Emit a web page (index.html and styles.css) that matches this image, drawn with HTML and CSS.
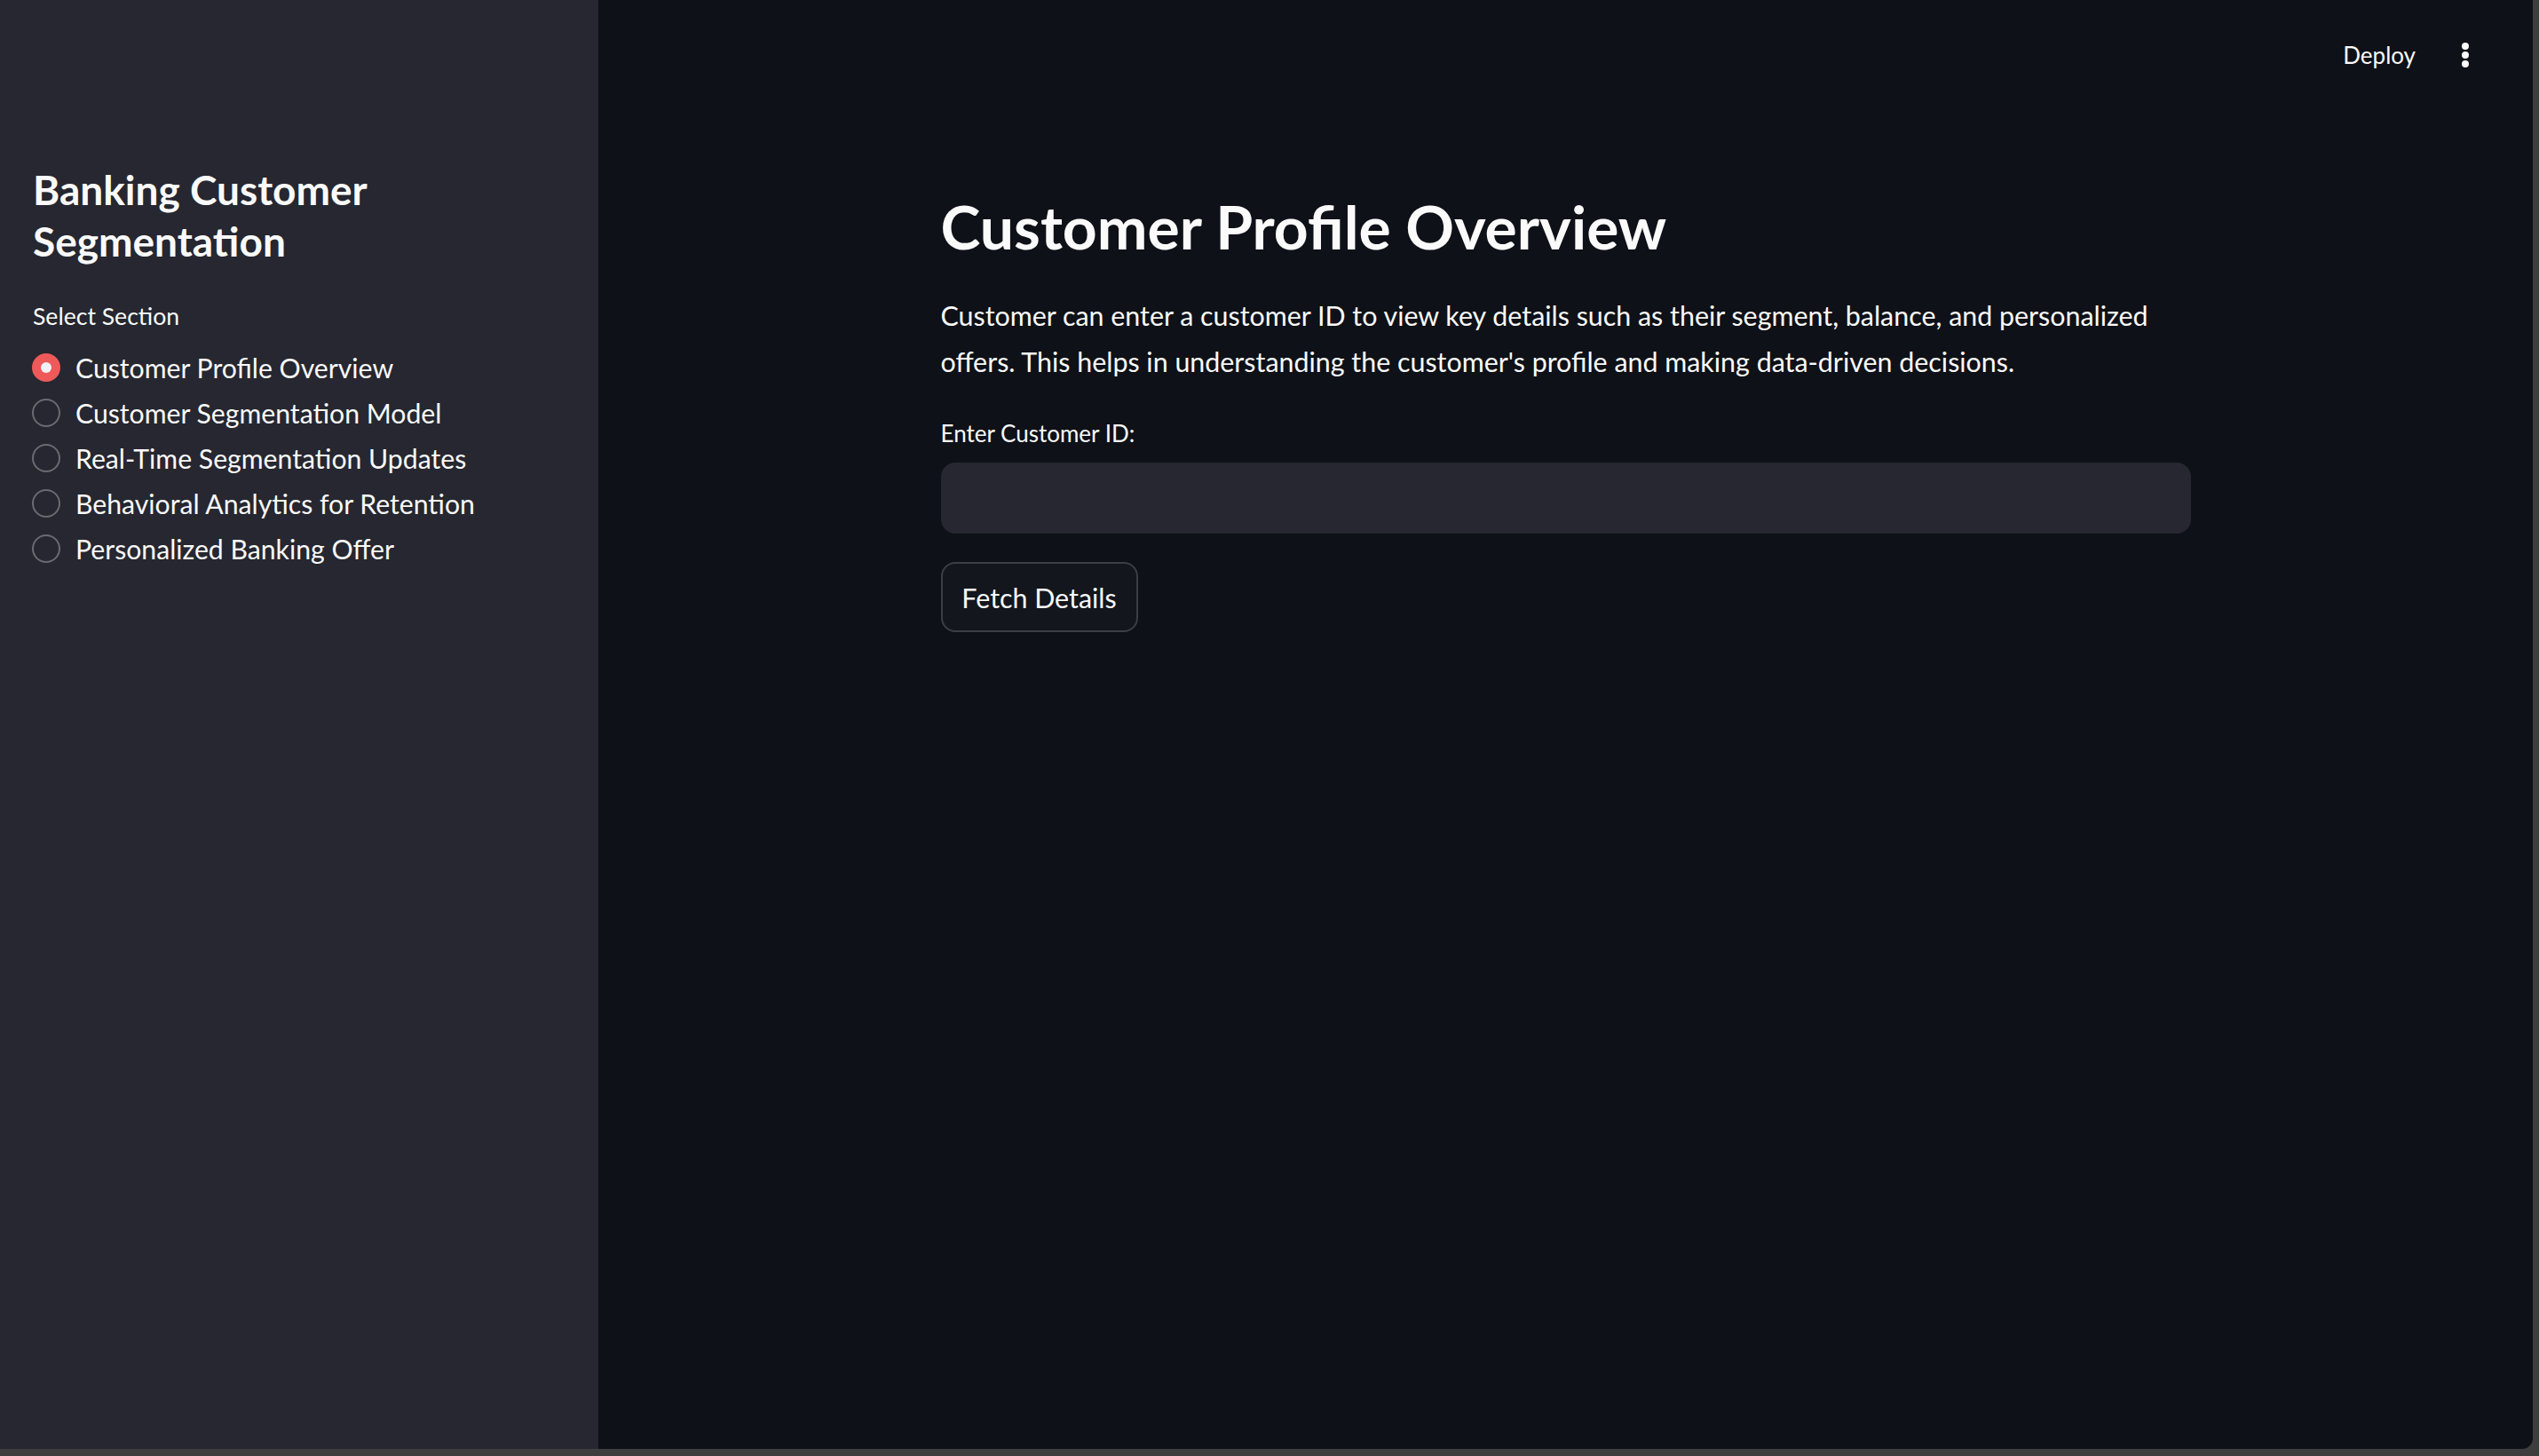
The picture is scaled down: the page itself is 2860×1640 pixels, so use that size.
FILE: index.html
```html
<!DOCTYPE html>
<html lang="en">
<head>
<meta charset="utf-8">
<title>Customer Profile Overview</title>
<link rel="stylesheet" href="styles.css">
</head>
<body>
<div class="app">
  <aside class="sidebar">
    <h1 class="side-title">Banking Customer Segmentation</h1>
    <div class="side-label">Select Section</div>
    <ul class="radio-list">
      <li class="radio-item checked"><span class="radio"></span><span>Customer Profile Overview</span></li>
      <li class="radio-item"><span class="radio"></span><span>Customer Segmentation Model</span></li>
      <li class="radio-item"><span class="radio"></span><span>Real-Time Segmentation Updates</span></li>
      <li class="radio-item"><span class="radio"></span><span>Behavioral Analytics for Retention</span></li>
      <li class="radio-item"><span class="radio"></span><span>Personalized Banking Offer</span></li>
    </ul>
  </aside>
  <main class="main">
    <header class="topbar">
      <span class="deploy">Deploy</span>
      <svg class="menu" width="8" height="28" viewBox="0 0 8 28"><circle cx="4" cy="4" r="4" fill="#fafafa"/><circle cx="4" cy="14" r="4" fill="#fafafa"/><circle cx="4" cy="24" r="4" fill="#fafafa"/></svg>
    </header>
    <section class="content">
      <h1 class="title">Customer Profile Overview</h1>
      <p class="desc">Customer can enter a customer ID to view key details such as their segment, balance, and personalized offers. This helps in understanding the customer's profile and making data-driven decisions.</p>
      <label class="field-label">Enter Customer ID:</label>
      <div class="input"></div>
      <button class="btn">Fetch Details</button>
    </section>
  </main>
</div>
</body>
</html>
```

FILE: styles.css
```css
html, body {
  margin: 0;
  padding: 0;
  background: #3e3e3e;
  font-family: Lato, "Noto Sans", sans-serif;
  color: #fafafa;
}
.app {
  display: flex;
  width: 2853px;
  height: 1632px;
  border-bottom-right-radius: 12px;
  overflow: hidden;
  background: #0e1117;
}
.sidebar {
  width: 674px;
  flex: none;
  box-sizing: border-box;
  background: #262730;
  padding: 185px 36px 0 37px;
}
.side-title {
  margin: 0;
  font-size: 46px;
  font-weight: 700;
  line-height: 58px;
  width: 460px;
}
.side-label {
  margin-top: 37px;
  font-size: 26.6px;
  line-height: 36px;
}
.radio-list {
  list-style: none;
  margin: 14px 0 0 -1px;
  padding: 0;
}
.radio-item {
  display: flex;
  align-items: center;
  height: 51px;
  font-size: 30.2px;
  gap: 17px;
}
.radio {
  width: 32px;
  height: 32px;
  box-sizing: border-box;
  border-radius: 50%;
  border: 2px solid #6a6b72;
  flex: none;
  display: flex;
  align-items: center;
  justify-content: center;
}
.checked .radio {
  background: #ee5a5a;
  border-color: #ee5a5a;
}
.checked .radio::after {
  content: "";
  width: 12px;
  height: 12px;
  border-radius: 50%;
  background: #f0f2f6;
}
.main {
  flex: 1;
  display: flex;
  flex-direction: column;
}
.topbar {
  display: flex;
  justify-content: flex-end;
  align-items: center;
  gap: 52px;
  padding: 42px 72px 0 0;
  height: 40px;
}
.deploy {
  font-size: 26px;
  line-height: 40px;
}
.content {
  width: 1408px;
  margin: 0 auto;
  padding-top: 128px;
}
.title {
  margin: 0;
  font-size: 67.8px;
  font-weight: 700;
  line-height: 90px;
}
.desc {
  margin: 29px 0 0;
  font-size: 30.4px;
  line-height: 52px;
}
.field-label {
  display: block;
  margin-top: 37px;
  font-size: 26px;
  line-height: 36px;
}
.input {
  margin-top: 15px;
  height: 80px;
  border-radius: 16px;
  background: #262730;
}
.btn {
  display: block;
  margin-top: 32px;
  height: 79px;
  padding: 0;
  width: 222px;
  white-space: nowrap;
  border: 2px solid #3c3e45;
  border-radius: 16px;
  background: #13161d;
  color: #fafafa;
  font-family: inherit;
  font-size: 30.4px;
}
```
